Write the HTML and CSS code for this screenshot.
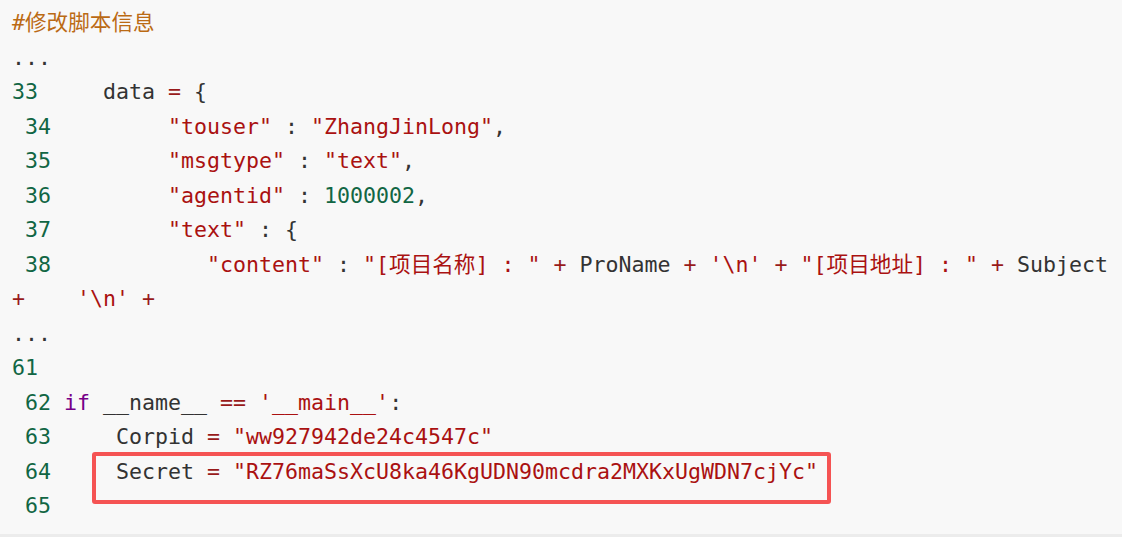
FILE: index.html
```html
<!DOCTYPE html>
<html lang="zh">
<head>
<meta charset="utf-8">
<title>code</title>
<link rel="stylesheet" href="styles.css">
</head>
<body>
<pre class="code"><div class="ln"><span class="cm">#修改脚本信息</span></div><div class="ln">...</div><div class="ln"><span class="nu">33</span>     data <span class="op">=</span> {</div><div class="ln"> <span class="nu">34</span>         <span class="st">"touser"</span> : <span class="st">"ZhangJinLong"</span>,</div><div class="ln"> <span class="nu">35</span>         <span class="st">"msgtype"</span> : <span class="st">"text"</span>,</div><div class="ln"> <span class="nu">36</span>         <span class="st">"agentid"</span> : <span class="nu">1000002</span>,</div><div class="ln"> <span class="nu">37</span>         <span class="st">"text"</span> : {</div><div class="ln"> <span class="nu">38</span>            <span class="st">"content"</span> : <span class="st">"[项目名称] : "</span> <span class="op">+</span> ProName <span class="op">+</span> <span class="st">'\n'</span> <span class="op">+</span> <span class="st">"[项目地址] : "</span> <span class="op">+</span> Subject</div><div class="ln"><span class="op">+</span>    <span class="st">'\n'</span> <span class="op">+</span></div><div class="ln">...</div><div class="ln"><span class="nu">61</span></div><div class="ln"> <span class="nu">62</span> <span class="kw">if</span> __name__ <span class="op">==</span> <span class="st">'__main__'</span>:</div><div class="ln"> <span class="nu">63</span>     Corpid <span class="op">=</span> <span class="st">"ww927942de24c4547c"</span></div><div class="ln mark-row"> <span class="nu">64</span>     Secret <span class="op">=</span> <span class="st">"RZ76maSsXcU8ka46KgUDN90mcdra2MXKxUgWDN7cjYc"</span><span class="mark"></span></div><div class="ln"> <span class="nu">65</span></div></pre>
</body>
</html>
```
FILE: styles.css
```css
html, body {
  margin: 0;
  padding: 0;
  background: #f8f8f8;
}
.code {
  margin: 0;
  box-sizing: border-box;
  height: 537px;
  padding: 6px 0 0 12px;
  background: #f8f8f8;
  border-bottom: 3px solid #ececec;
  font-family: "DejaVu Sans Mono", "Noto Sans CJK SC", monospace;
  font-size: 21.6px;
  color: #333333;
  white-space: pre;
  overflow: hidden;
}
.ln {
  height: 34.5px;
  line-height: 34.5px;
}
.cm { color: #bb6a14; }
.nu { color: #116644; }
.st { color: #aa1111; }
.op { color: #981a1a; }
.kw { color: #770088; }
.mark-row {
  position: relative;
}
.mark {
  position: absolute;
  left: 80px;
  top: -3px;
  width: 739px;
  height: 52px;
  box-sizing: border-box;
  border: 4px solid #f55353;
  border-radius: 3px;
}
```
